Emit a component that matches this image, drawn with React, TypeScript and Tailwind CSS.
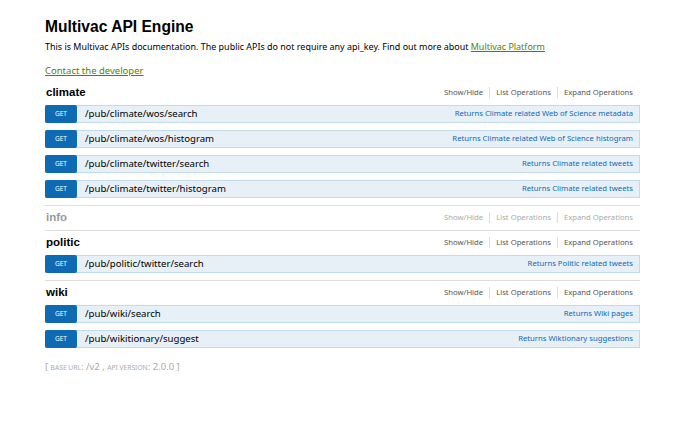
import React from "react";

type Op = { path: string; summary: string };
type Resource = { name: string; ops: Op[]; muted?: boolean };

const resources: Resource[] = [
  {
    name: "climate",
    ops: [
      { path: "/pub/climate/wos/search", summary: "Returns Climate related Web of Science metadata" },
      { path: "/pub/climate/wos/histogram", summary: "Returns Climate related Web of Science histogram" },
      { path: "/pub/climate/twitter/search", summary: "Returns Climate related tweets" },
      { path: "/pub/climate/twitter/histogram", summary: "Returns Climate related tweets" },
    ],
  },
  { name: "info", ops: [], muted: true },
  {
    name: "politic",
    ops: [{ path: "/pub/politic/twitter/search", summary: "Returns Politic related tweets" }],
  },
  {
    name: "wiki",
    ops: [
      { path: "/pub/wiki/search", summary: "Returns Wiki pages" },
      { path: "/pub/wikitionary/suggest", summary: "Returns Wiktionary suggestions" },
    ],
  },
];

const droid = "font-['Noto_Sans',sans-serif]";

function ResourceBlock({ res, last }: { res: Resource; last: boolean }) {
  return (
    <li className={last ? "" : "border-b border-[#ddd]"}>
      <div className="flex h-[24px] items-center justify-between">
        <h2
          className={`pl-px font-['Liberation_Sans',Arial,sans-serif] text-[11.5px] font-bold ${
            res.muted ? "text-[#999]" : "text-black"
          }`}
        >
          {res.name}
        </h2>
        <ul
          className={`${droid} flex items-center pr-[7px] text-[7.7px] ${
            res.muted ? "text-[#aaa]" : "text-[#555]"
          }`}
        >
          <li>Show/Hide</li>
          <li className="mx-[6px] h-[11px] w-px bg-[#ddd]" />
          <li>List Operations</li>
          <li className="mx-[6px] h-[11px] w-px bg-[#ddd]" />
          <li>Expand Operations</li>
        </ul>
      </div>
      {res.ops.map((op) => (
        <div
          key={op.path}
          className="mb-[7px] flex h-[18px] items-center border border-[#c3d9ec] bg-[#e7f0f7]"
        >
          <span
            className={`${droid} -my-px -ml-px flex h-[18px] w-[32px] items-center justify-center rounded-[2px] bg-[#0f6ab4] text-[6.5px] text-white`}
          >
            GET
          </span>
          <span className={`${droid} ml-[8px] text-[9.6px] text-black`}>{op.path}</span>
          <span className={`${droid} ml-auto pr-[6px] text-[7.7px] text-[#0f6ab4]`}>
            {op.summary}
          </span>
        </div>
      ))}
    </li>
  );
}

export default function App() {
  return (
    <div className="min-h-[430px] bg-white pt-[17px] pr-[40px] pl-[45px]">
      <h1 className="font-['Liberation_Sans',Arial,sans-serif] text-[15.6px] leading-[20px] font-bold text-black">
        Multivac API Engine
      </h1>
      <p className={`${droid} mt-[3px] text-[8.95px] leading-[14px] text-black`}>
        This is Multivac APIs documentation. The public APIs do not require any api_key. Find out
        more about{" "}
        <a href="#" className="text-[#547f00] underline">
          Multivac Platform
        </a>
      </p>
      <p className={`${droid} mt-[10px] text-[9.5px] leading-[14px]`}>
        <a href="#" className="text-[#547f00] underline">
          Contact the developer
        </a>
      </p>
      <ul className="mt-[3px]">
        {resources.map((r, i) => (
          <ResourceBlock key={r.name} res={r} last={i === resources.length - 1} />
        ))}
      </ul>
      <div className={`${droid} mt-[12px] text-[9.5px] leading-[14px] text-[#aaa]`}>
        [ <span className="text-[6.7px] uppercase">base url</span>: /v2 ,{" "}
        <span className="text-[6.7px] uppercase">api version</span>: 2.0.0 ]
      </div>
    </div>
  );
}
